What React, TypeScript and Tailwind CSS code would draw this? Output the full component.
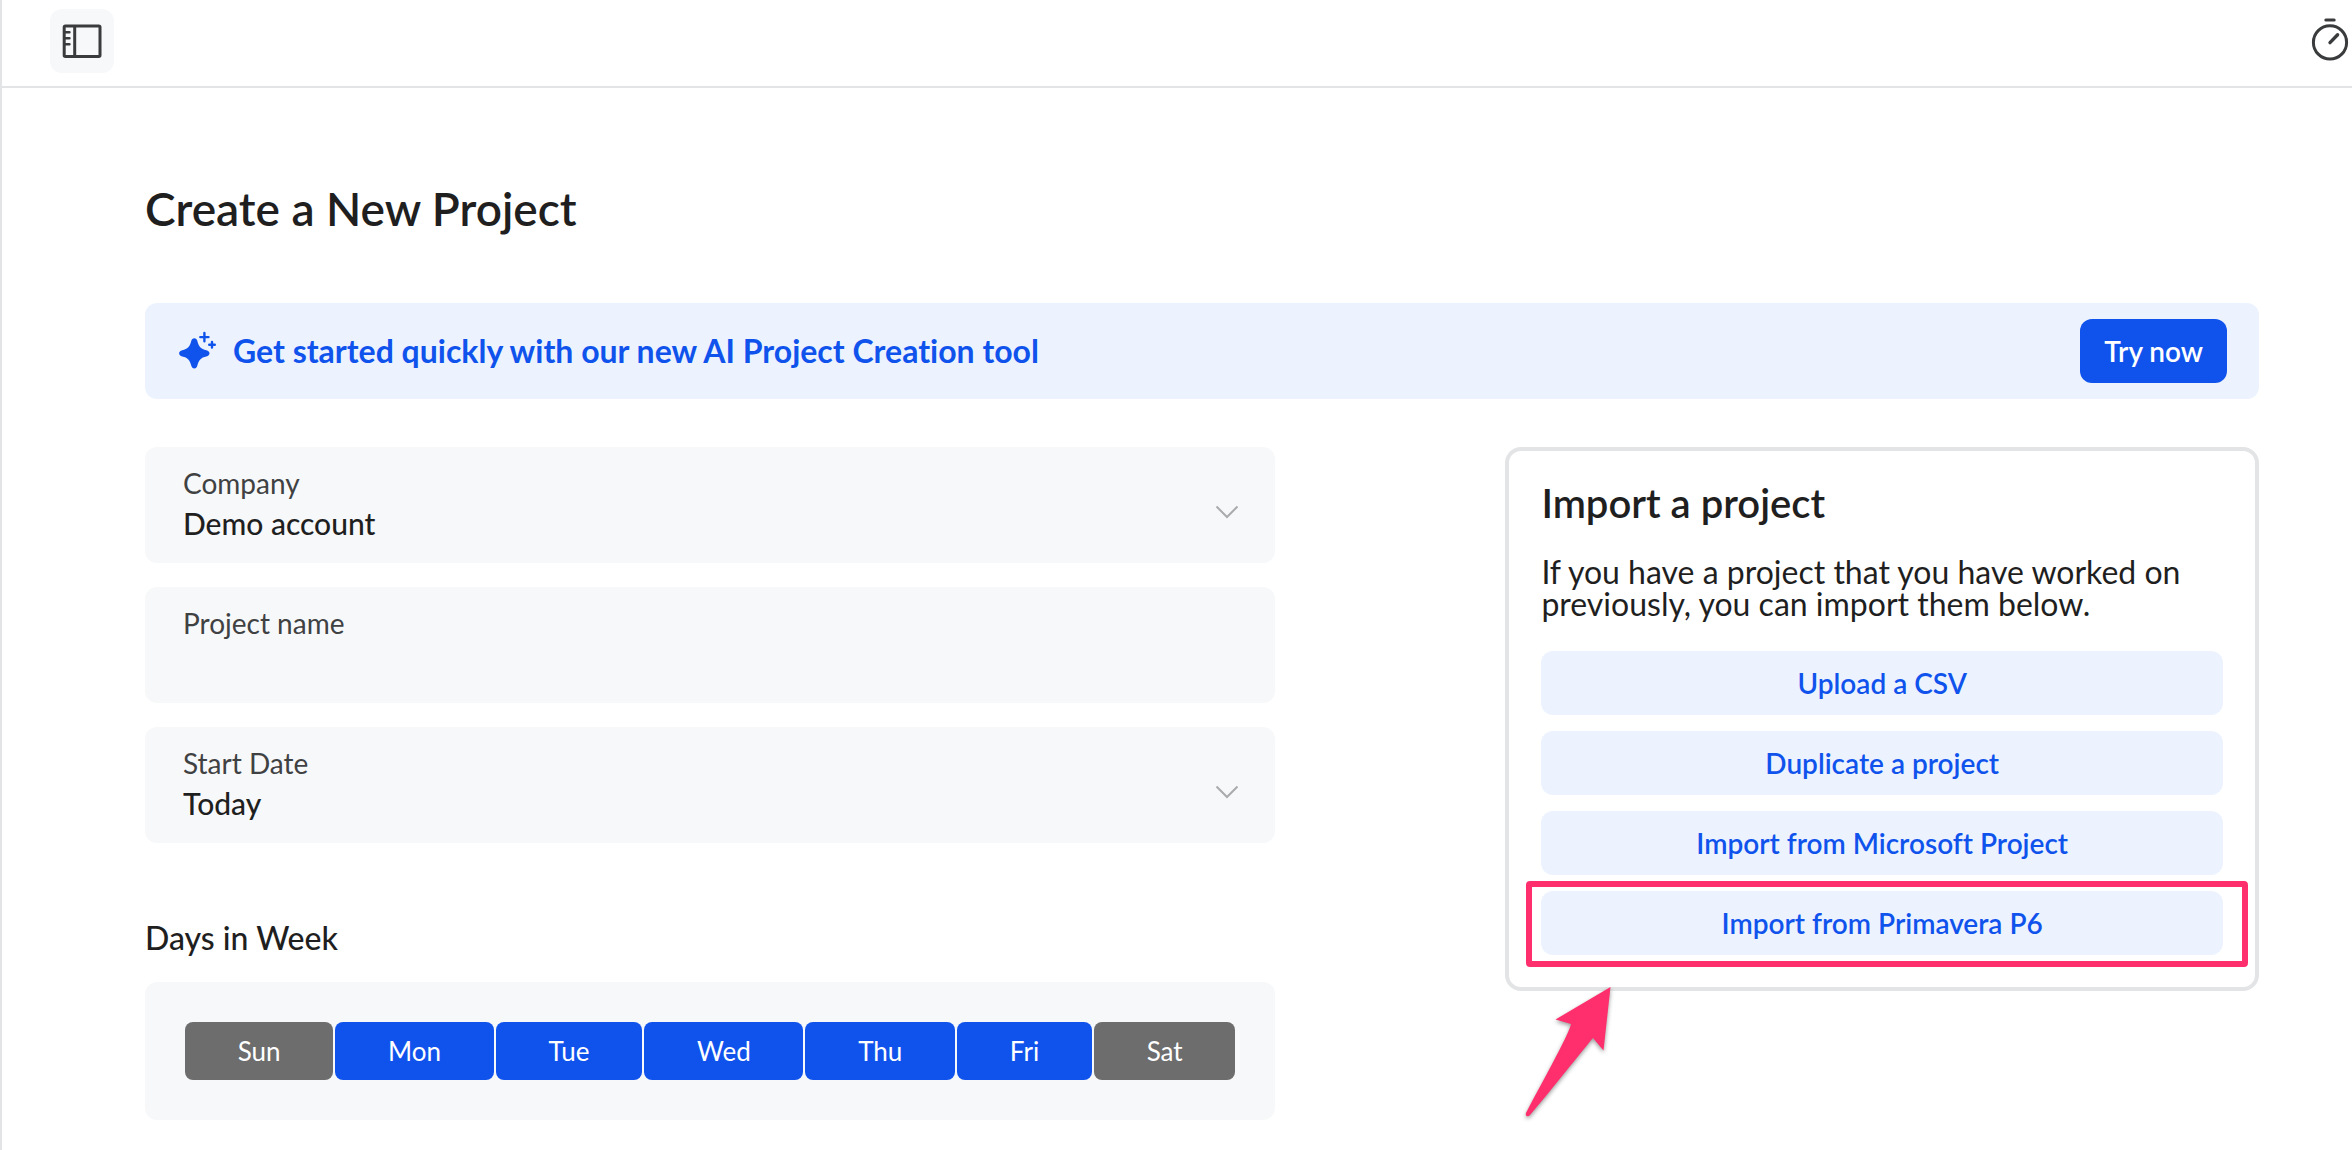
import React, { useState } from "react";

const DAYS = ["Sun", "Mon", "Tue", "Wed", "Thu", "Fri", "Sat"];

const SidebarIcon = () => (
  <svg
    className="h-10 w-10"
    viewBox="0 0 40 40"
    fill="none"
    stroke="currentColor"
    strokeWidth={3}
    strokeLinejoin="round"
    aria-hidden="true"
  >
    <rect x="2.2" y="5" width="35.8" height="30.4" rx="1.2" />
    <path d="M12.7 5v30" />
    <path d="M2.4 11.2h5M2.4 17.2h5M2.4 23.2h5" strokeLinecap="round" strokeWidth={2.6} />
  </svg>
);

const TimerIcon = () => (
  <svg
    className="h-12 w-11"
    viewBox="0 0 44 48"
    fill="none"
    stroke="currentColor"
    strokeWidth={3}
    strokeLinecap="round"
    aria-hidden="true"
  >
    <circle cx="22" cy="25.4" r="16.6" />
    <path d="M17.8 3h8.4" />
    <path d="M22 25.6l7.6-7.8" strokeWidth={3.4} />
  </svg>
);

const SparkleIcon = () => (
  <svg className="h-10 w-10 shrink-0" viewBox="0 0 40 40" aria-hidden="true">
    <path
      fill="currentColor"
      d="M17.3 7.2c1.5 0 2.6 1 3 2.6 1.3 5.6 3.6 8.5 9.1 9.4 1.9.4 3.1 1.6 3.1 3.1s-1.2 2.7-3.1 3.1c-5.5.9-7.8 3.8-9.1 9.4-.4 1.6-1.5 2.6-3 2.6s-2.6-1-3-2.6c-1.3-5.6-3.6-8.5-9.1-9.4-1.9-.4-3.1-1.6-3.1-3.1s1.2-2.7 3.1-3.1c5.5-.9 7.8-3.8 9.1-9.4.4-1.6 1.5-2.6 3-2.6z"
    />
    <path
      fill="none"
      stroke="currentColor"
      strokeWidth={2.4}
      strokeLinecap="round"
      d="M27.4 2v8.2M23.3 6.1h8.2M35 11v5.6M32.2 13.8h5.6"
    />
  </svg>
);

const ChevronIcon = () => (
  <svg
    className="pointer-events-none absolute right-9 top-[58px] h-3.5 w-6 text-[#a9abac]"
    viewBox="0 0 24 14"
    fill="none"
    stroke="currentColor"
    strokeWidth={2}
    aria-hidden="true"
  >
    <path d="M1.5 1.5L12 12 22.5 1.5" />
  </svg>
);

const ArrowMark = () => (
  <svg
    className="pointer-events-none absolute left-[-25px] top-[90px] h-[150px] w-[110px] drop-shadow-[0_2px_2px_rgba(0,0,0,0.4)]"
    viewBox="0 0 110 150"
    aria-hidden="true"
  >
    <path
      fill="#ff2e6c"
      d="M94.5 6L87.5 69.5 77 57C65 71 38 106 14 134c-2 2.5-5 1-4-2C31 92 53 53 55 43L39.5 38.5z"
    />
  </svg>
);

interface FieldProps {
  id: string;
  label: string;
  children: React.ReactNode;
  hasMenu?: boolean;
}

const Field: React.FC<FieldProps> = ({ id, label, children, hasMenu }) => (
  <div className="relative rounded-xl bg-[#f7f8fa] pb-[18px] pt-[18px]">
    <label
      htmlFor={id}
      className="block px-[38px] text-[28px] leading-9 text-[#3f4142]"
    >
      {label}
    </label>
    {children}
    {hasMenu && <ChevronIcon />}
  </div>
);

const controlClass =
  "block h-11 w-full appearance-none bg-transparent px-[38px] text-[30px] font-medium outline-none";

const importClass =
  "h-16 w-full rounded-xl bg-[#ecf3ff] text-[28px] font-semibold text-[#1053ec]";

export default function App() {
  const [name, setName] = useState("");
  const [workDays, setWorkDays] = useState(["Mon", "Tue", "Wed", "Thu", "Fri"]);

  const toggleDay = (day: string) => {
    setWorkDays((prev) =>
      prev.includes(day) ? prev.filter((d) => d !== day) : [...prev, day]
    );
  };

  return (
    <div className="min-h-screen border-l-2 border-[#e3e4e5] bg-white font-['Lato',sans-serif] text-[#1f1f1f] [font-variant-ligatures:none]">
      <header className="flex items-center justify-between border-b-2 border-[#e3e4e5] pb-[13px] pl-12 pt-[9px] text-[#3a3b3c]">
        <button
          type="button"
          aria-label="Toggle sidebar"
          className="flex h-16 w-16 items-center justify-center rounded-xl bg-[#f7f8fa]"
        >
          <SidebarIcon />
        </button>
        <button type="button" aria-label="Timer">
          <TimerIcon />
        </button>
      </header>

      <main className="pb-[30px] pl-[143px] pr-[93px] pt-[93px]">
        <h1 className="text-[46px] font-semibold leading-[56px]">
          Create a New Project
        </h1>

        <div className="mt-[66px] flex items-center gap-4 rounded-xl bg-[#ecf3ff] px-8 py-4 text-[#1053ec]">
          <SparkleIcon />
          <p className="flex-1 text-[32px] font-bold leading-10">
            Get started quickly with our new AI Project Creation tool
          </p>
          <button
            type="button"
            className="h-16 rounded-xl bg-[#1053ec] px-6 text-[28px] font-semibold text-white"
          >
            Try now
          </button>
        </div>

        <div className="mt-12 grid grid-cols-[3fr_2fr] items-start gap-[230px]">
          <form onSubmit={(e) => e.preventDefault()}>
            <div className="flex flex-col gap-6">
              <Field id="company" label="Company" hasMenu>
                <select id="company" className={controlClass}>
                  <option>Demo account</option>
                </select>
              </Field>
              <Field id="project-name" label="Project name">
                <input
                  id="project-name"
                  type="text"
                  value={name}
                  onChange={(e) => setName(e.target.value)}
                  className={controlClass}
                />
              </Field>
              <Field id="start-date" label="Start Date" hasMenu>
                <select id="start-date" className={controlClass}>
                  <option>Today</option>
                </select>
              </Field>
            </div>

            <h2
              id="days-label"
              className="mt-[75px] text-[32px] font-medium leading-10"
            >
              Days in Week
            </h2>
            <div
              role="group"
              aria-labelledby="days-label"
              className="mt-6 flex gap-0.5 rounded-xl bg-[#f7f8fa] p-10"
            >
              {DAYS.map((day) => (
                <button
                  key={day}
                  type="button"
                  aria-pressed={workDays.includes(day)}
                  onClick={() => toggleDay(day)}
                  className={`h-[58px] flex-auto rounded-lg px-12 text-[26px] text-white ${
                    workDays.includes(day) ? "bg-[#1053ec]" : "bg-[#6d6d6d]"
                  }`}
                >
                  {day}
                </button>
              ))}
            </div>
          </form>

          <section className="rounded-2xl border-4 border-[#e3e4e5] p-8">
            <h2 className="text-[40px] font-semibold leading-10">
              Import a project
            </h2>
            <p className="mb-[31px] mt-[33px] text-[32px] leading-8">
              If you have a project that you have worked on previously, you can
              import them below.
            </p>
            <div className="flex flex-col gap-4">
              <button type="button" className={importClass}>
                Upload a CSV
              </button>
              <button type="button" className={importClass}>
                Duplicate a project
              </button>
              <button type="button" className={importClass}>
                Import from Microsoft Project
              </button>
              <div className="relative">
                <button type="button" className={importClass}>
                  Import from Primavera P6
                </button>
                <div className="pointer-events-none absolute -bottom-3 -left-[15px] -right-[25px] -top-[10px] rounded-sm border-[6px] border-[#ff2e6c]" />
                <ArrowMark />
              </div>
            </div>
          </section>
        </div>
      </main>
    </div>
  );
}
